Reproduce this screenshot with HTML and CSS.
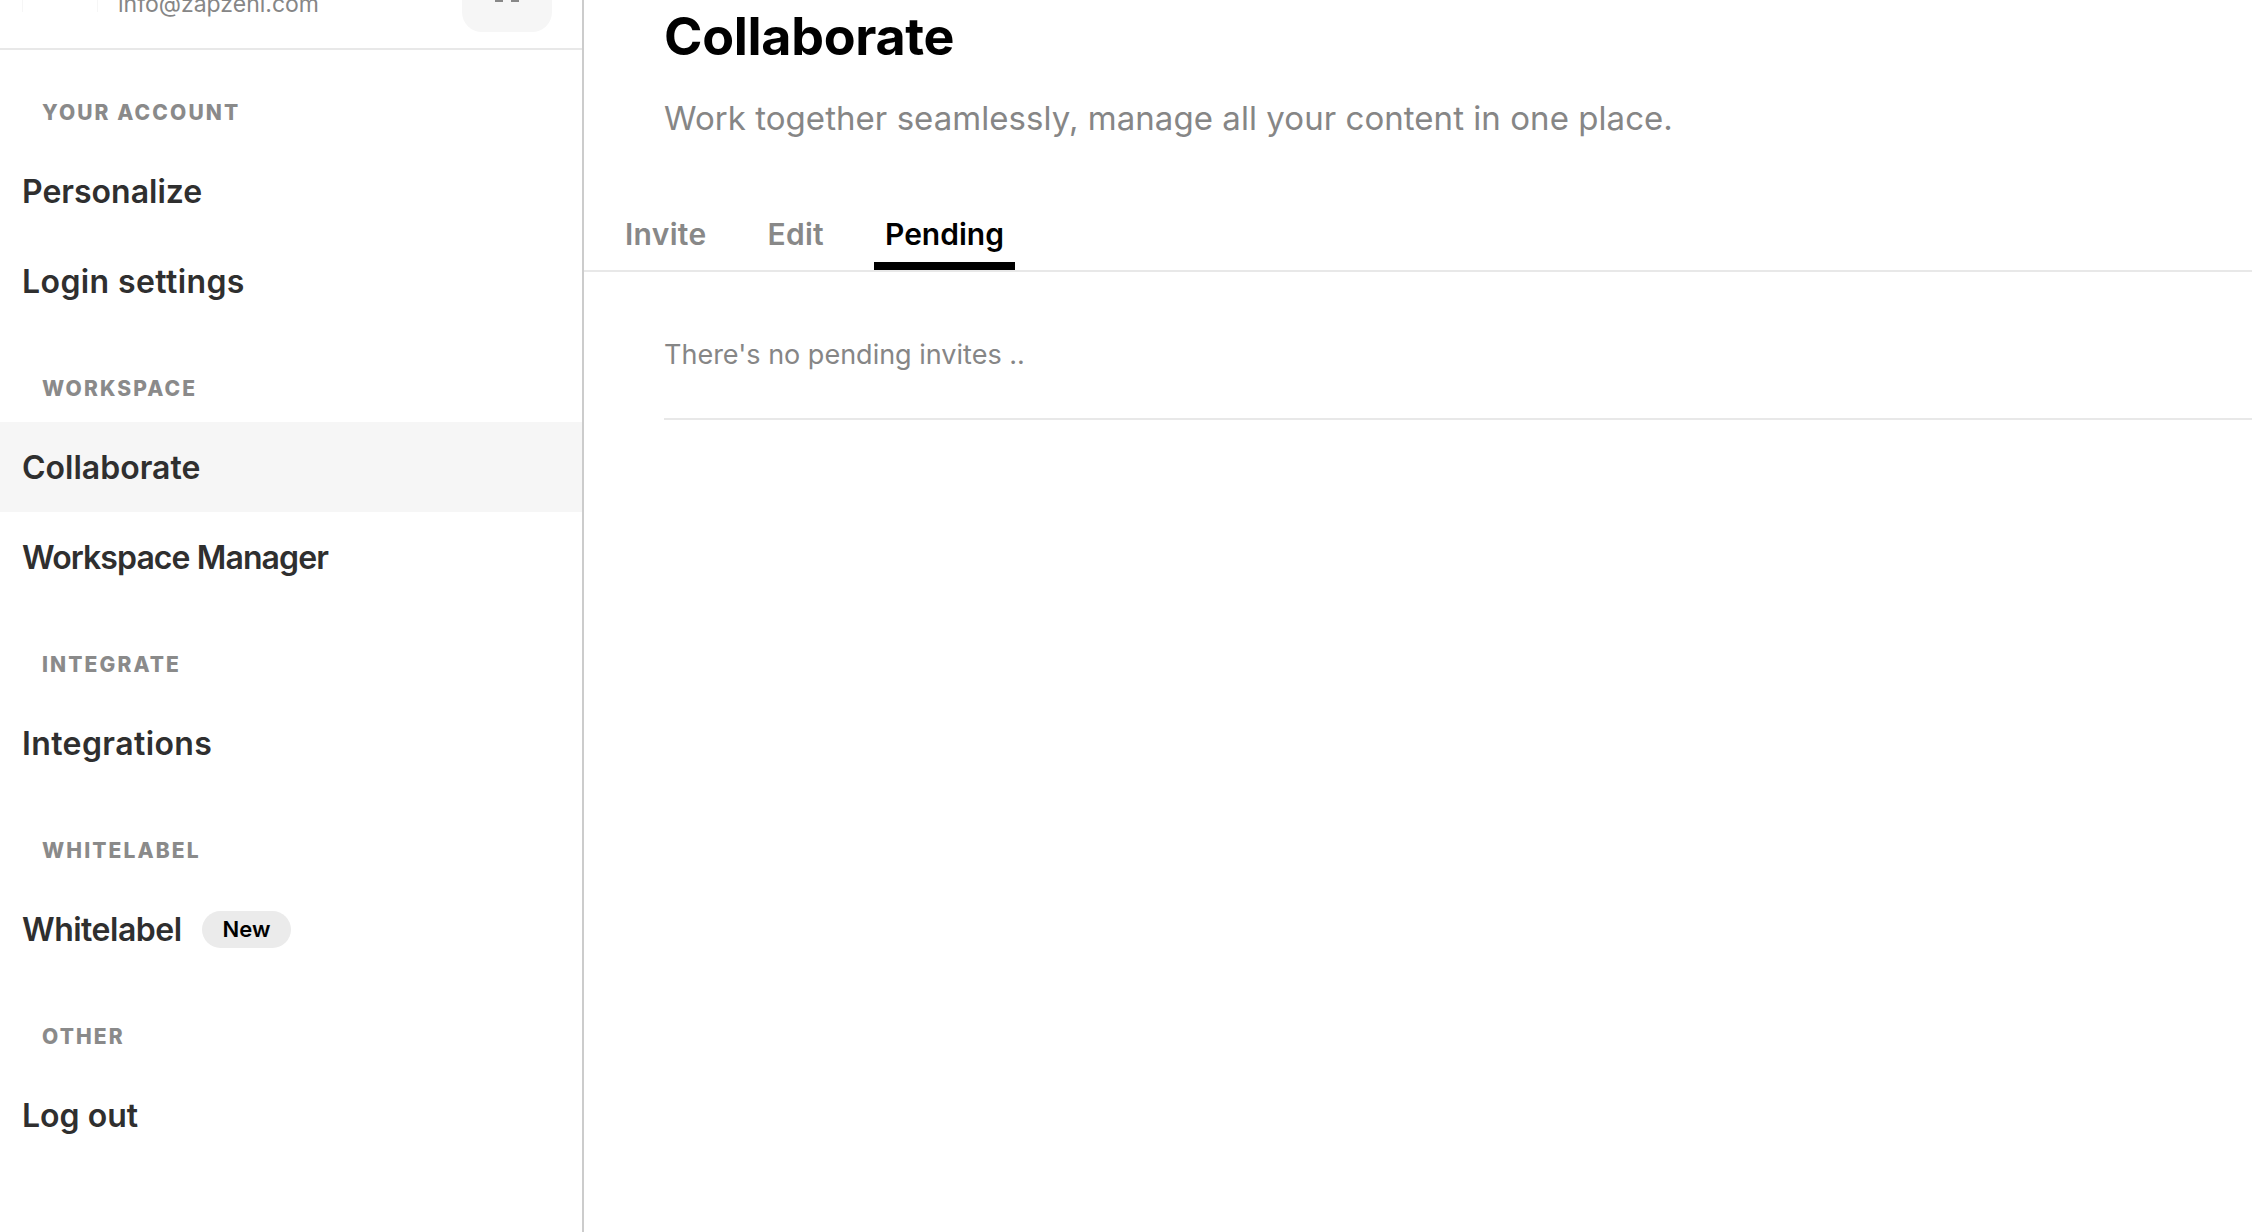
FILE: index.html
```html
<!DOCTYPE html>
<html lang="en">
<head>
<meta charset="utf-8">
<title>Collaborate</title>
<link rel="stylesheet" href="styles.css">
</head>
<body>
<div class="app">
  <aside class="sidebar">
    <header class="account">
      <div class="avatar"></div>
      <div class="email">info@zapzeni.com</div>
      <div class="menu-btn"><svg width="24" height="24" viewBox="0 0 24 24"><path d="M0 22h8M16 22h8" stroke="#888" stroke-width="4" fill="none"/></svg></div>
    </header>
    <nav class="nav">
      <section class="group">
        <h3 class="group-label">YOUR ACCOUNT</h3>
        <a class="item">Personalize</a>
        <a class="item wide">Login settings</a>
      </section>
      <section class="group">
        <h3 class="group-label">WORKSPACE</h3>
        <a class="item active">Collaborate</a>
        <a class="item tight">Workspace Manager</a>
      </section>
      <section class="group">
        <h3 class="group-label">INTEGRATE</h3>
        <a class="item wide">Integrations</a>
      </section>
      <section class="group">
        <h3 class="group-label">WHITELABEL</h3>
        <a class="item narrow">Whitelabel <span class="badge">New</span></a>
      </section>
      <section class="group">
        <h3 class="group-label">OTHER</h3>
        <a class="item">Log out</a>
      </section>
    </nav>
  </aside>
  <main class="main">
    <div class="head">
      <h1 class="title">Collaborate</h1>
      <p class="subtitle">Work together seamlessly, manage all your content in one place.</p>
    </div>
    <div class="tabs">
      <a class="tab">Invite</a>
      <a class="tab">Edit</a>
      <a class="tab current">Pending</a>
    </div>
    <div class="panel">
      <p class="empty">There's no pending invites ..</p>
    </div>
  </main>
</div>
</body>
</html>
```
FILE: styles.css
```css
* { box-sizing: border-box; }
html, body { margin: 0; height: 100%; overflow: hidden; background: #fff; }
body { font-family: Inter, "Noto Sans", sans-serif; }
.app { display: flex; height: 1232px; }
.sidebar { width: 584px; flex: none; border-right: 2px solid #ccc; }
.account { height: 50px; border-bottom: 2px solid #e8e8e8; display: flex; align-items: flex-end; padding: 0 30px 16px 22px; }
.avatar { width: 76px; height: 60px; flex: none; border: solid #f6f6f6; border-width: 0 1px; margin-bottom: 20px; }
.email { flex: 1; margin: 0 0 15px 20px; font-size: 23px; line-height: 26px; color: #868686; white-space: nowrap; }
.menu-btn { width: 90px; height: 90px; flex: none; padding-top: 6px; background: #f6f6f6; border-radius: 20px; display: flex; align-items: center; justify-content: center; }
.nav { padding-top: 28px; }
.group { margin-bottom: 28px; }
.group-label { margin: 0; height: 68px; padding-left: 42px; font-size: 21px; line-height: 70px; font-weight: 800; letter-spacing: 2.1px; color: #8a8a8a; }
.item { display: flex; align-items: center; height: 90px; padding-left: 22px; font-size: 32px; font-weight: 600; color: #2f2f2f; gap: 20px; }
.item.tight { letter-spacing: -0.9px; }
.item.wide { letter-spacing: 0.4px; }
.item.narrow { letter-spacing: -0.5px; }
.item.active { background: #f6f6f6; }
.badge { display: inline-flex; align-items: center; height: 37px; padding: 0 21px; border-radius: 19px; background: #ebebeb; color: #000; font-size: 22px; font-weight: 600; letter-spacing: 0; }
.main { flex: 1; min-width: 0; }
.head { padding-left: 80px; height: 212px; }
.title { margin: 0; padding-top: 4px; font-size: 52px; line-height: 66px; font-weight: 700; letter-spacing: -0.3px; color: #000; }
.subtitle { margin: 26px 0 0; font-size: 33px; line-height: 44px; letter-spacing: 0.05px; color: #868686; }
.tabs { display: flex; height: 60px; border-bottom: 2px solid #e8e8e8; padding-left: 30px; gap: 39px; }
.tab { height: 58px; padding: 4px 11px 0; font-size: 30px; line-height: 36px; font-weight: 600; letter-spacing: 0.3px; color: #888; }
.tab.current { color: #000; letter-spacing: 0; border-bottom: 8px solid #000; }
.panel { margin-left: 80px; border-bottom: 2px solid #e8e8e8; height: 148px; padding-top: 65px; }
.empty { margin: 0; font-size: 27px; line-height: 36px; color: #868686; }
```
